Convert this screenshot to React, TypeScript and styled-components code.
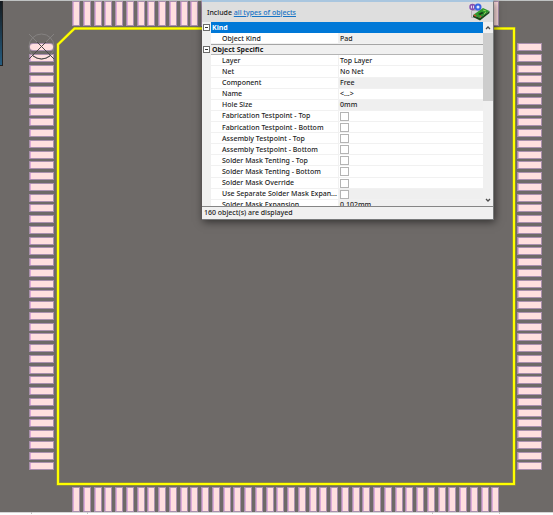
import React, { useState } from 'react';
import styled, { createGlobalStyle } from 'styled-components';

const GlobalStyle = createGlobalStyle`
  * { box-sizing: border-box; }
  body {
    margin: 0;
    background: #6e6a68;
    font-family: "Noto Sans", "Open Sans", sans-serif;
    font-size: 7px;
    font-weight: 500;
    line-height: 11px;
    color: #1c1c1c;
  }
`;

const Workspace = styled.main`
  position: relative;
  overflow: hidden;
`;

const Board = styled.svg`
  display: block;
  width: 100%;
  height: auto;
`;

const Inspector = styled.section`
  position: absolute;
  top: 0;
  left: 202px;
  width: 292px;
  display: flex;
  flex-direction: column;
  background: #f0f0f0;
  border-top: 2px solid #a9c6df;
  border-right: 1px solid #77797a;
  border-bottom: 1px solid #77797a;
  box-shadow: 1px 2px 8px rgba(0, 0, 0, 0.55);
`;

const FilterBar = styled.header`
  display: flex;
  align-items: center;
  justify-content: space-between;
  height: 20px;
  padding: 0 3px 0 5px;
  background: #dedede;
`;

const FilterLink = styled.a`
  color: #1673c5;
  text-decoration: underline;
`;

const BoardIcon = styled.svg`
  display: block;
  width: 21px;
  height: 18px;
`;

const Body = styled.div`
  display: flex;
  height: 184px;
  overflow: hidden;
`;

const TableClip = styled.div`
  flex: 1;
  min-width: 0;
  overflow: hidden;
`;

const Properties = styled.table`
  width: 100%;
  height: 189px;
  table-layout: fixed;
  border-collapse: collapse;
  background: #fff;
`;

const GutterCol = styled.col`
  width: 9px;
`;

const NameCol = styled.col`
  width: 128px;
`;

const Gutter = styled.td`
  padding: 0 0 0 1px;
  background: #f0f0f0;
  line-height: 0;
`;

const Toggle = styled.button`
  display: block;
  width: 7px;
  height: 7px;
  padding: 0;
  border: 1px solid #6c6c6c;
  background: linear-gradient(#333, #333) center / 3px 1px no-repeat #fff;
`;

const GroupTitle = styled.th<{ $selected?: boolean }>`
  height: 11px;
  padding: 0 1px;
  text-align: left;
  font-weight: 700;
  line-height: 10px;
  color: ${p => (p.$selected ? '#fff' : '#1c1c1c')};
  background: ${p => (p.$selected ? '#0078d7' : '#f0f0f0')};
  box-shadow: ${p => (p.$selected ? 'none' : 'inset 0 1px #a5a5a5, inset 0 -1px #b5b5b5')};
`;

const PropertyName = styled.th`
  height: 11px;
  padding: 0 0 0 11px;
  white-space: nowrap;
  text-align: left;
  font-weight: 500;
  line-height: 10px;
  box-shadow: inset -1px -1px #f1f1f1;
`;

const PropertyValue = styled.td<{ $shaded?: boolean }>`
  height: 11px;
  padding: 0 0 0 1px;
  line-height: 10px;
  background: ${p => (p.$shaded ? '#efefef' : '#fff')};
  box-shadow: inset 0 -1px #f1f1f1;
`;

const Tick = styled.input`
  appearance: none;
  display: block;
  width: 9px;
  height: 9px;
  margin: 0;
  border: 1px solid #b4b4b4;
  background: #fff;
  &:checked { background: #0078d7; }
`;

const ScrollRail = styled.div`
  display: flex;
  flex-direction: column;
  width: 10px;
  background: #f0f0f0;
`;

const ScrollButton = styled.button`
  display: flex;
  align-items: center;
  justify-content: center;
  height: 11px;
  padding: 0;
  border: 0;
  background: transparent;
`;

const ScrollThumb = styled.div`
  height: 68px;
  margin-bottom: auto;
  background: #cdcdcd;
`;

const Status = styled.footer`
  height: 13px;
  padding: 0 2px;
  border-top: 1px solid #858585;
`;

const PADS = Array.from({ length: 40 }, (_, i) => Math.round(i * 10.75));

function Pad({ x, y, w, h, round }: { x: number; y: number; w: number; h: number; round?: boolean }) {
  return (
    <g>
      <rect x={x} y={y} width={w} height={h} rx={round ? 4 : 0} fill="#aa90ad" />
      <rect x={x + 1} y={y + 1} width={w - 2} height={h - 2} rx={round ? 3 : 0} fill="#ffdfdf" />
      {!round && <path d={`M${x + 1.5} ${y + 1}v${h - 2}`} stroke="#dcaad8" />}
    </g>
  );
}

function Footprint() {
  return (
    <Board viewBox="0 0 553 515" role="img" aria-label="Quad flat package footprint with 160 pads">
      <defs>
        <linearGradient id="preview" x1="0" y1="0" x2="0" y2="1">
          <stop offset="0" stopColor="#151a1e" />
          <stop offset="1" stopColor="#255c80" />
        </linearGradient>
      </defs>
      <rect width="553" height="515" fill="#6e6a68" />
      <rect width="553" height="1" fill="#bfc2c2" />
      <rect y="1" width="3" height="65" fill="#222" />
      <rect y="1" width="2" height="64" fill="url(#preview)" />
      {PADS.map(d => (
        <g key={d}>
          <Pad x={29} y={43 + d} w={25} h={8} round={d === 0} />
          <Pad x={517} y={43 + d} w={25} h={8} />
          <Pad x={72 + d} y={1} w={8} h={25} />
          <Pad x={72 + d} y={487} w={8} h={25} />
        </g>
      ))}
      <path d="M58 44.500L74.500 28.500H514V484H58Z" fill="none" stroke="#a5a325" strokeWidth="3" />
      <path d="M58 44.500L74.500 28.500H514V484H58Z" fill="none" stroke="#ffff00" strokeWidth="2" />
      <g fill="none" stroke="#4b4848" strokeWidth="1">
        <circle cx="41.500" cy="46.500" r="12.500" stroke="#858281" />
        <path d="M29 34L37 42M54 34L46 42" stroke="#858281" />
        <path d="M37 42L54 59M46 42L29 59M33 56Q41.500 62 50 56" />
      </g>
      <rect y="512" width="553" height="3" fill="#fff" />
      <rect y="512" width="553" height="1" fill="#d5d5d5" />
      <path d="M31.500 512v2M87.500 512v2M432.500 512v2M499.500 512v2" stroke="#c2c2c2" />
    </Board>
  );
}

interface Property {
  name: string;
  value?: string;
  shaded?: boolean;
}

interface Group {
  title: string;
  selected?: boolean;
  items: Property[];
}

const GROUPS: Group[] = [
  { title: 'Kind', selected: true, items: [{ name: 'Object Kind', value: 'Pad', shaded: true }] },
  {
    title: 'Object Specific',
    items: [
      { name: 'Layer', value: 'Top Layer' },
      { name: 'Net', value: 'No Net' },
      { name: 'Component', value: 'Free', shaded: true },
      { name: 'Name', value: '<...>' },
      { name: 'Hole Size', value: '0mm', shaded: true },
      { name: 'Fabrication Testpoint - Top' },
      { name: 'Fabrication Testpoint - Bottom' },
      { name: 'Assembly Testpoint - Top' },
      { name: 'Assembly Testpoint - Bottom' },
      { name: 'Solder Mask Tenting - Top' },
      { name: 'Solder Mask Tenting - Bottom' },
      { name: 'Solder Mask Override' },
      { name: 'Use Separate Solder Mask Expan...', shaded: true },
      { name: 'Solder Mask Expansion', value: '0.102mm', shaded: true },
    ],
  },
];

function PropertyGroup({ group }: { group: Group }) {
  const [open, setOpen] = useState(true);
  return (
    <tbody>
      <tr>
        <Gutter>
          <Toggle type="button" aria-expanded={open} aria-label={group.title} onClick={() => setOpen(!open)} />
        </Gutter>
        <GroupTitle colSpan={2} $selected={group.selected}>{group.title}</GroupTitle>
      </tr>
      {open && group.items.map(item => {
        const id = item.name.replace(/\W+/g, '-').toLowerCase();
        return (
          <tr key={item.name}>
            <Gutter />
            <PropertyName scope="row">
              {item.value ? item.name : <label htmlFor={id}>{item.name}</label>}
            </PropertyName>
            <PropertyValue $shaded={item.shaded}>
              {item.value ?? <Tick id={id} type="checkbox" />}
            </PropertyValue>
          </tr>
        );
      })}
    </tbody>
  );
}

function Chevron({ up }: { up?: boolean }) {
  return (
    <svg width="6" height="5" viewBox="0 0 6 5" aria-hidden="true">
      <path d={up ? 'M1 4L3 2L5 4' : 'M1 1L3 3L5 1'} fill="none" stroke="#4d4d4d" strokeWidth="1.300" />
    </svg>
  );
}

export default function App() {
  return (
    <>
      <GlobalStyle />
      <Workspace>
        <Footprint />
        <Inspector aria-label="Inspector">
          <FilterBar>
            <span>Include <FilterLink href="#types">all types of objects</FilterLink></span>
            <BoardIcon viewBox="0 0 21 18" aria-hidden="true">
              <path d="M2.500 7.500h8v7h-8z" fill="#d8d5dc" stroke="#b5b1ba" />
              <path d="M4 12L14 5L20.500 8L11 15Z" fill="#2f9a2c" />
              <path d="M4 12v2L11 17.500L20.500 10V8L11 15Z" fill="#174819" />
              <path d="M9 11l4-2 2 1-4 2z" fill="#123c16" />
              <path d="M14 7l3 1M15 11l2-2" stroke="#8ccb52" />
              <path d="M5 12l2 1M11 14l1-1" stroke="#c94f35" strokeWidth="1.500" />
              <circle cx="3.500" cy="4" r="2.500" fill="#e7dcf0" stroke="#8751af" strokeWidth="1.500" />
              <path d="M3.500 2v5" stroke="#8751af" />
              <circle cx="9" cy="4" r="2.500" fill="#e1eaff" stroke="#3964e1" strokeWidth="2" />
            </BoardIcon>
          </FilterBar>
          <Body>
            <TableClip>
              <Properties aria-label="Object properties">
                <colgroup>
                  <GutterCol />
                  <NameCol />
                  <col />
                </colgroup>
                {GROUPS.map(group => <PropertyGroup key={group.title} group={group} />)}
              </Properties>
            </TableClip>
            <ScrollRail>
              <ScrollButton type="button" aria-label="Scroll up"><Chevron up /></ScrollButton>
              <ScrollThumb />
              <ScrollButton type="button" aria-label="Scroll down"><Chevron /></ScrollButton>
            </ScrollRail>
          </Body>
          <Status>160 object(s) are displayed</Status>
        </Inspector>
      </Workspace>
    </>
  );
}
